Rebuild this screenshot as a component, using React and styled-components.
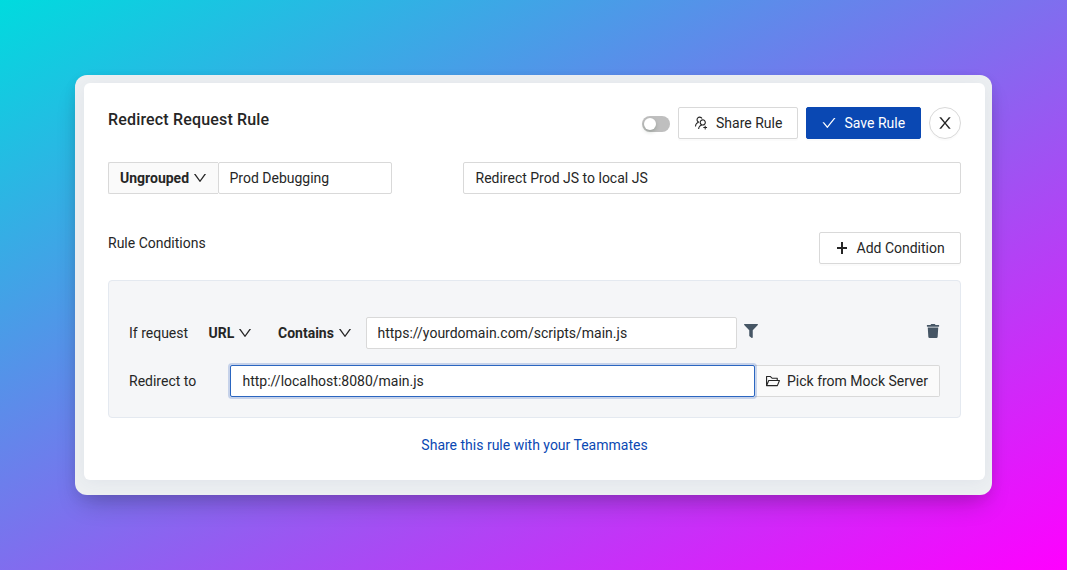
import React from "react";
import styled, { createGlobalStyle, css } from "styled-components";
import {
  AiOutlineUsergroupAdd,
  AiOutlineDown,
  AiOutlineCheck,
  AiOutlineFolderOpen,
} from "react-icons/ai";
import { FaFilter, FaTrash } from "react-icons/fa";

const GlobalStyle = createGlobalStyle`
  *, *::before, *::after { box-sizing: border-box; }
  body {
    margin: 0;
    font-family: Roboto, "Liberation Sans", sans-serif;
    font-size: 14px;
    line-height: 22px;
    color: #262626;
  }
  button, input { font: inherit; color: inherit; letter-spacing: inherit; }
  svg { display: block; flex: none; }
`;

const Backdrop = styled.main`
  height: 570px;
  padding: 75px;
  background: linear-gradient(to bottom right, #00dbde, #ff00ff);
`;

const Frame = styled.div`
  height: 420px;
  padding: 8px 7px 15px 9px;
  border-radius: 12px;
  background: #edf0f2;
  box-shadow: 0 14px 26px -8px rgba(0, 0, 0, 0.24), 0 4px 14px rgba(0, 0, 0, 0.06);
`;

const Card = styled.section`
  height: 397px;
  padding: 24px;
  border-radius: 6px;
  background: #fff;
  box-shadow: 0 2px 18px rgba(50, 70, 130, 0.07);
`;

const Header = styled.header`
  display: flex;
  justify-content: space-between;
`;

const Title = styled.h1`
  margin: 0;
  padding-top: 2px;
  font-size: 16px;
  font-weight: 500;
  letter-spacing: 0.17px;
  line-height: 22px;
`;

const Actions = styled.div`
  display: flex;
  align-items: center;
  gap: 8px;
`;

const Toggle = styled.button`
  width: 28px;
  height: 16px;
  margin-top: 2px;
  padding: 2px;
  border: 0;
  border-radius: 8px;
  background: #bfbfbf;
`;

const Knob = styled.span`
  display: block;
  width: 12px;
  height: 12px;
  border-radius: 50%;
  background: #fff;
  box-shadow: 0 2px 4px rgba(0, 35, 11, 0.2);
`;

const Button = styled.button`
  display: flex;
  align-items: center;
  gap: ${(p) => p.$gap || 7}px;
  width: ${(p) => p.$width}px;
  height: 32px;
  padding: 0 14px;
  border: 1px solid #d9d9d9;
  border-radius: 2px;
  background: #fff;
  white-space: nowrap;
  box-shadow: 0 2px 0 rgba(0, 0, 0, 0.015);
  ${(p) =>
    p.$primary &&
    css`
      border-color: #0a48b3;
      background: #0a48b3;
      color: #fff;
    `}
`;

const CloseButton = styled(Button)`
  justify-content: center;
  padding: 0;
  border-radius: 50%;
`;

const NameRow = styled.div`
  display: flex;
  justify-content: space-between;
  margin-top: 23px;
`;

const InputGroup = styled.div`
  display: flex;
`;

const Addon = styled.div`
  display: flex;
  align-items: center;
  gap: ${(p) => p.$gap}px;
  width: ${(p) => p.$width}px;
  height: 32px;
  padding-left: ${(p) => (p.$side === "left" ? 11 : 10)}px;
  border: 1px solid #d9d9d9;
  background: #fafafa;
  white-space: nowrap;
  ${(p) =>
    p.$side === "left"
      ? "border-right: 0; border-radius: 2px 0 0 2px;"
      : "border-left: 0; border-radius: 0 2px 2px 0;"}
`;

const Field = styled.input`
  width: ${(p) => p.$width}px;
  height: 32px;
  padding: 4px 11px 4px ${(p) => p.$inset || 11}px;
  border: 1px solid ${(p) => (p.$active ? "#2b66c0" : "#d9d9d9")};
  border-radius: 2px;
  outline: 0;
  background: #fff;
  ${(p) =>
    p.$active &&
    css`
      z-index: 1;
      box-shadow: 0 0 0 2px rgba(10, 72, 179, 0.2);
    `}
`;

const Strong = styled.span`
  font-weight: 700;
`;

const SectionHead = styled.div`
  display: flex;
  justify-content: space-between;
  margin-top: 38px;
`;

const Conditions = styled.div`
  display: flex;
  flex-direction: column;
  gap: 16px;
  height: 138px;
  margin-top: 16px;
  padding: 36px 20px 0;
  border: 1px solid #e4e9f0;
  border-radius: 4px;
  background: #f5f6f8;
`;

const Row = styled.div`
  display: flex;
  align-items: center;
`;

const Label = styled.span`
  width: ${(p) => p.$width}px;
`;

const Picker = styled.div`
  display: flex;
  align-items: center;
  gap: 3px;
  width: ${(p) => p.$width}px;
`;

const RowIcon = styled.span`
  margin: -4px 0 0 ${(p) => p.$before};
  color: #465665;
`;

const ShareLink = styled.a`
  display: block;
  margin-top: 16px;
  color: #0a48b3;
  text-align: center;
`;

const CloseIcon = () => (
  <svg width="18" height="18" viewBox="0 0 1024 1024" fill="currentColor">
    <path d="M563.8 512l262.5-312.9c4.4-5.2.7-13.1-6.1-13.1h-79.8c-4.7 0-9.2 2.1-12.3 5.7L511.6 449.8 295.1 191.7c-3-3.6-7.5-5.7-12.3-5.7H203c-6.8 0-10.5 7.9-6.1 13.1L459.4 512 196.9 824.9A7.95 7.95 0 0 0 203 838h79.8c4.7 0 9.2-2.1 12.3-5.7l216.5-258.1 216.5 258.1c3 3.6 7.5 5.7 12.3 5.7h79.8c6.8 0 10.5-7.9 6.1-13.1L563.8 512z" />
  </svg>
);

const PlusIcon = () => (
  <svg width="16" height="16" viewBox="0 0 16 16" stroke="currentColor" strokeWidth="2">
    <path d="M8 2v12M3 8h10" />
  </svg>
);

export default function App() {
  return (
    <>
      <GlobalStyle />
      <Backdrop>
        <Frame>
          <Card>
            <Header>
              <Title>Redirect Request Rule</Title>
              <Actions>
                <Toggle aria-label="Enable rule"><Knob /></Toggle>
                <Button $width={120}><AiOutlineUsergroupAdd size={16} />Share Rule</Button>
                <Button $width={115} $gap={7.5} $primary><AiOutlineCheck size={16} />Save Rule</Button>
                <CloseButton $width={32} aria-label="Close"><CloseIcon /></CloseButton>
              </Actions>
            </Header>
            <NameRow>
              <InputGroup>
                <Addon $side="left" $width={110} $gap={3}>
                  <Strong>Ungrouped</Strong>
                  <AiOutlineDown size={16} />
                </Addon>
                <Field $width={174} $inset={10.5} defaultValue="Prod Debugging" />
              </InputGroup>
              <Field $width={498} $inset={11.5} defaultValue="Redirect Prod JS to local JS" />
            </NameRow>
            <SectionHead>
              <span>Rule Conditions</span>
              <Button $width={142} $gap={6.5}><PlusIcon />Add Condition</Button>
            </SectionHead>
            <Conditions>
              <Row>
                <Label $width={79.5}>If request</Label>
                <Picker $width={69.5}><Strong>URL</Strong><AiOutlineDown size={16} /></Picker>
                <Picker $width={88}><Strong>Contains</Strong><AiOutlineDown size={16} /></Picker>
                <Field $width={371} $inset={10.5} defaultValue="https://yourdomain.com/scripts/main.js" />
                <RowIcon $before="7px"><FaFilter size={14} /></RowIcon>
                <RowIcon $before="auto"><FaTrash size={14} /></RowIcon>
              </Row>
              <Row>
                <Label $width={101}>Redirect to</Label>
                <Field $width={525} $inset={11.5} $active defaultValue="http://localhost:8080/main.js" />
                <Addon $side="right" $width={185} $gap={6}>
                  <AiOutlineFolderOpen size={16} />
                  Pick from Mock Server
                </Addon>
              </Row>
            </Conditions>
            <ShareLink>Share this rule with your Teammates</ShareLink>
          </Card>
        </Frame>
      </Backdrop>
    </>
  );
}
